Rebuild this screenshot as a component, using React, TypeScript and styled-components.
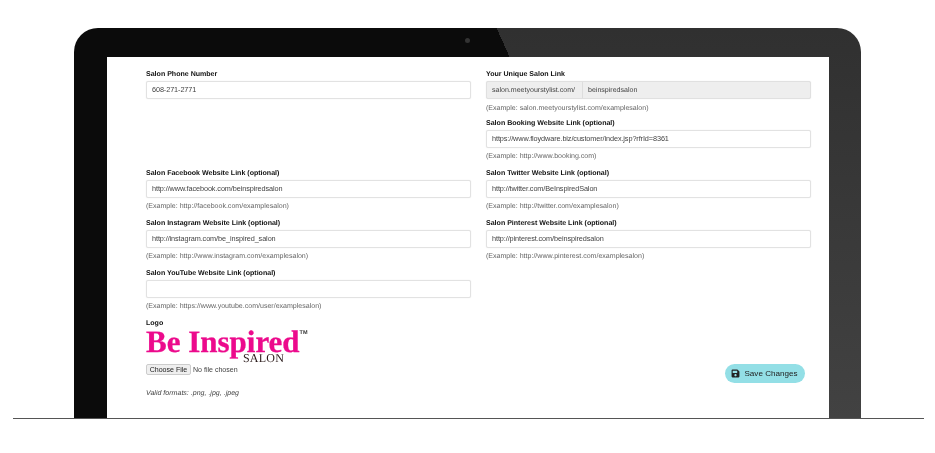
import styled, { createGlobalStyle } from "styled-components";
import { FaSave } from "react-icons/fa";

const GlobalStyle = createGlobalStyle`
  html, body {
    margin: 0;
    padding: 0;
    background: #fff;
    font-family: "Liberation Sans", Arial, sans-serif;
    text-rendering: geometricPrecision;
  }
`;

const Page = styled.div`
  width: 935px;
  height: 453px;
  padding-top: 28px;
  box-sizing: border-box;
  overflow: hidden;
`;

const Laptop = styled.div`
  position: relative;
  box-sizing: border-box;
  width: 787px;
  height: 390px;
  margin-left: 74px;
  padding: 29px 32px 0 33px;
  border-radius: 24px 24px 0 0;
  background:
    linear-gradient(65.9deg, #0b0b0b 545px, transparent 545px),
    linear-gradient(180deg, #303030, #424242);
`;

const Camera = styled.div`
  position: absolute;
  top: 10px;
  left: 391px;
  width: 5px;
  height: 5px;
  border-radius: 50%;
  background: #333;
`;

const Screen = styled.div`
  box-sizing: border-box;
  height: 100%;
  padding: 11px 18px 0 39px;
  background: #fff;
`;

const Form = styled.form`
  display: grid;
  grid-template-columns: 325px 325px;
  grid-template-rows: 49px repeat(4, 50px) auto;
  column-gap: 15px;
  filter: blur(0.3px);
`;

const Field = styled.div`
  display: flex;
  flex-direction: column;
  min-width: 0;
`;

const Label = styled.label`
  height: 10px;
  margin-bottom: 3px;
  font-size: 7.05px;
  line-height: 14px;
  font-weight: bold;
  color: #111;
`;

const TextInput = styled.input`
  box-sizing: border-box;
  width: 100%;
  height: 18px;
  padding: 0 5px 1px;
  border: 1px solid #e2e2e2;
  border-radius: 2px;
  outline: none;
  background: #fff;
  font-family: inherit;
  font-size: 7.3px;
  letter-spacing: -0.1px;
  color: #444;
  box-shadow: 0 0 1px #ddd;
`;

const Group = styled.div`
  display: flex;
  height: 18px;
  box-sizing: border-box;
  border: 1px solid #e0e0e0;
  border-radius: 2px;
  background: #eee;
  box-shadow: 0 0 1px #ddd;
`;

const Addon = styled.span`
  flex: none;
  width: 96px;
  padding-left: 5px;
  box-sizing: border-box;
  border-right: 1px solid #ddd;
  font-size: 7.05px;
  line-height: 17px;
  color: #444;
`;

const GroupValue = styled.span`
  padding-left: 5px;
  font-size: 7.05px;
  line-height: 17px;
  color: #444;
`;

const Hint = styled.div<{ $gap?: number }>`
  margin-top: ${(p) => p.$gap ?? 4}px;
  font-size: 7.05px;
  line-height: 10px;
  color: #666;
`;

const Logo = styled.div`
  display: flex;
  flex-direction: column;
  width: 162px;
  color: #ec0a8c;
`;

const LogoName = styled.div`
  display: flex;
  font-family: "Liberation Serif", serif;
  font-size: 31px;
  line-height: 24px;
  font-weight: bold;
  white-space: nowrap;
  -webkit-text-stroke: 0.3px #ec0a8c;
`;

const Trademark = styled.span`
  font-family: "Liberation Sans", sans-serif;
  font-size: 5.5px;
  line-height: 6px;
  color: #333;
  -webkit-text-stroke: 0;
`;

const LogoSub = styled.div`
  margin-left: 97px;
  font-family: "Liberation Serif", serif;
  font-size: 12px;
  line-height: 9px;
  letter-spacing: 0.2px;
  color: #2a1a1a;
`;

const FileInput = styled.input`
  width: 130px;
  margin: 1px 0 0;
  font-family: inherit;
  font-size: 7.05px;
  color: #444;

  &::file-selector-button {
    height: 11px;
    width: 45px;
    margin-right: 2px;
    padding: 0;
    border: 1px solid #ccc;
    border-radius: 2px;
    background: #efefef;
    font-family: inherit;
    font-size: 7.05px;
    color: #222;
  }
`;

const Formats = styled.div`
  margin-top: 14px;
  font-size: 7.05px;
  line-height: 10px;
  font-style: italic;
  color: #444;
`;

const Actions = styled.div`
  display: flex;
  justify-content: flex-end;
  padding: 47px 6px 0 0;
`;

const SaveButton = styled.button`
  display: flex;
  align-items: center;
  justify-content: center;
  gap: 4px;
  width: 80px;
  height: 19px;
  padding: 0 1px 0 0;
  border: none;
  border-radius: 10px;
  background: #93dfe6;
  font-family: inherit;
  font-size: 8.1px;
  color: #222;

  svg {
    width: 9px;
    height: 9px;
  }
`;

const Rule = styled.div`
  width: 911px;
  height: 1px;
  margin-left: 13px;
  background: #555;
`;

const Spacer = styled.div``;

type LinkProps = {
  label: string;
  value?: string;
  example: string;
};

const LinkField = ({ label, value, example }: LinkProps) => (
  <Field>
    <Label>{label}</Label>
    <TextInput defaultValue={value} />
    <Hint>{example}</Hint>
  </Field>
);

export default function App() {
  return (
    <Page>
      <GlobalStyle />
      <Laptop>
        <Camera />
        <Screen>
          <Form>
            <Field>
              <Label>Salon Phone Number</Label>
              <TextInput defaultValue="608-271-2771" />
            </Field>
            <Field>
              <Label>Your Unique Salon Link</Label>
              <Group>
                <Addon>salon.meetyourstylist.com/</Addon>
                <GroupValue>beinspiredsalon</GroupValue>
              </Group>
              <Hint $gap={5}>(Example: salon.meetyourstylist.com/examplesalon)</Hint>
            </Field>

            <Spacer />
            <LinkField
              label="Salon Booking Website Link (optional)"
              value="https://www.floydware.biz/customer/index.jsp?rfrId=8361"
              example="(Example: http://www.booking.com)"
            />

            <LinkField
              label="Salon Facebook Website Link (optional)"
              value="http://www.facebook.com/beinspiredsalon"
              example="(Example: http://facebook.com/examplesalon)"
            />
            <LinkField
              label="Salon Twitter Website Link (optional)"
              value="http://twitter.com/BeInspiredSalon"
              example="(Example: http://twitter.com/examplesalon)"
            />

            <LinkField
              label="Salon Instagram Website Link (optional)"
              value="http://instagram.com/be_inspired_salon"
              example="(Example: http://www.instagram.com/examplesalon)"
            />
            <LinkField
              label="Salon Pinterest Website Link (optional)"
              value="http://pinterest.com/beinspiredsalon"
              example="(Example: http://www.pinterest.com/examplesalon)"
            />

            <LinkField
              label="Salon YouTube Website Link (optional)"
              example="(Example: https://www.youtube.com/user/examplesalon)"
            />
            <Spacer />

            <Field>
              <Label>Logo</Label>
              <Logo>
                <LogoName>
                  Be Inspired<Trademark>TM</Trademark>
                </LogoName>
                <LogoSub>SALON</LogoSub>
              </Logo>
              <FileInput type="file" />
              <Formats>Valid formats: .png, .jpg, .jpeg</Formats>
            </Field>
            <Actions>
              <SaveButton type="button">
                <FaSave />
                Save Changes
              </SaveButton>
            </Actions>
          </Form>
        </Screen>
      </Laptop>
      <Rule />
    </Page>
  );
}
